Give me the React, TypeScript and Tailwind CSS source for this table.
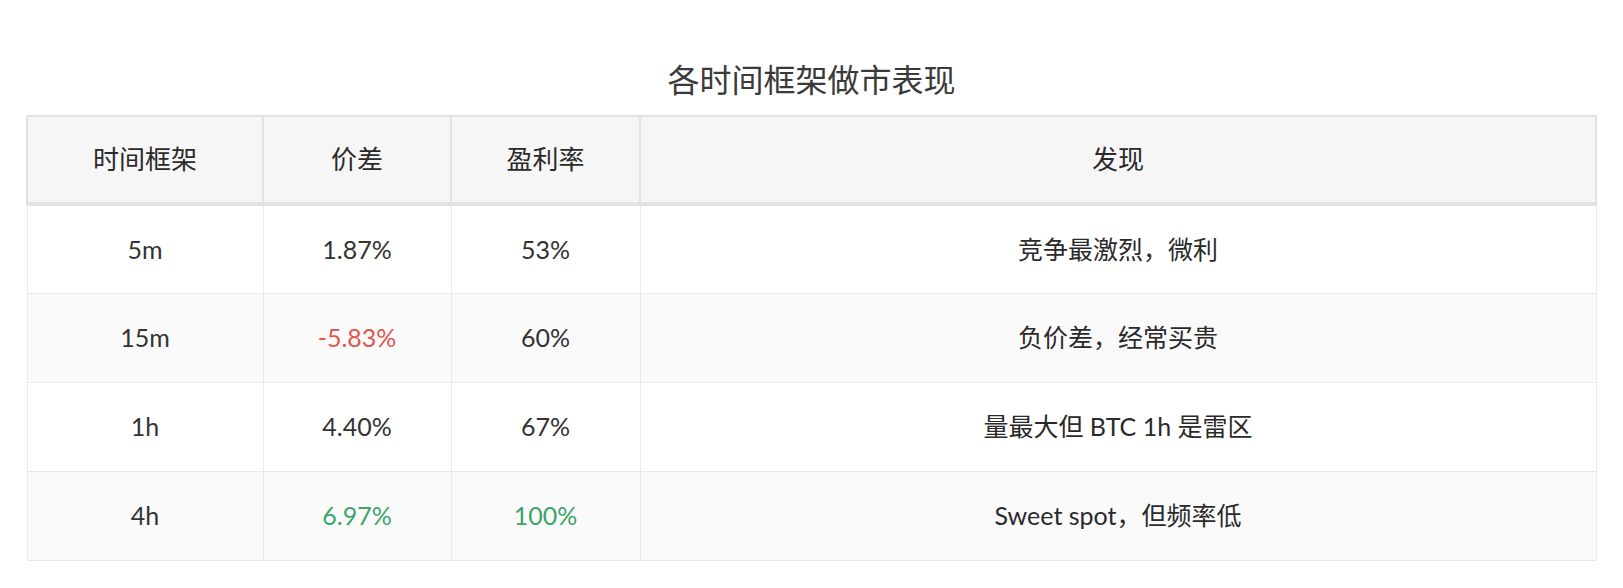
import React from "react";

type Row = {
  tf: string;
  spread: string;
  spreadColor?: string;
  win: string;
  winColor?: string;
  note: string;
};

const rows: Row[] = [
  { tf: "5m", spread: "1.87%", win: "53%", note: "竞争最激烈，微利" },
  { tf: "15m", spread: "-5.83%", spreadColor: "text-[#e0574f]", win: "60%", note: "负价差，经常买贵" },
  { tf: "1h", spread: "4.40%", win: "67%", note: "量最大但 BTC 1h 是雷区" },
  { tf: "4h", spread: "6.97%", spreadColor: "text-[#3aa66a]", win: "100%", winColor: "text-[#3aa66a]", note: "Sweet spot，但频率低" },
];

export default function App() {
  return (
    <div className="w-[1623px] h-[588px] bg-white px-[26px] pt-[58px] font-['Lato','Noto_Sans_CJK_SC',sans-serif] text-[#333]">
      <h2 className="text-center text-[32px] leading-[44px] font-normal text-[#3a3a3a] mb-[13px]">
        各时间框架做市表现
      </h2>
      <table className="w-full border-collapse table-fixed">
        <colgroup>
          <col className="w-[236px]" />
          <col className="w-[188px]" />
          <col className="w-[189px]" />
          <col />
        </colgroup>
        <thead>
          <tr>
            {["时间框架", "价差", "盈利率", "发现"].map((h) => (
              <th
                key={h}
                className="h-[88px] bg-[#f6f6f6] border-2 border-b-4 border-[#e2e2e2] text-[26px] font-normal text-[#2a2a2a] text-center"
              >
                {h}
              </th>
            ))}
          </tr>
        </thead>
        <tbody>
          {rows.map((r, i) => (
            <tr key={r.tf} className={i % 2 === 1 ? "bg-[#fafafa]" : "bg-white"}>
              <td className="h-[89px] border border-[#e9e9e9] text-center text-[25px] text-[#333]">{r.tf}</td>
              <td className={`h-[89px] border border-[#e9e9e9] text-center text-[25px] ${r.spreadColor ?? "text-[#333]"}`}>
                {r.spread}
              </td>
              <td className={`h-[89px] border border-[#e9e9e9] text-center text-[25px] ${r.winColor ?? "text-[#333]"}`}>
                {r.win}
              </td>
              <td className="h-[89px] border border-[#e9e9e9] text-center text-[25px] text-[#2a2a2a]">{r.note}</td>
            </tr>
          ))}
        </tbody>
      </table>
    </div>
  );
}
